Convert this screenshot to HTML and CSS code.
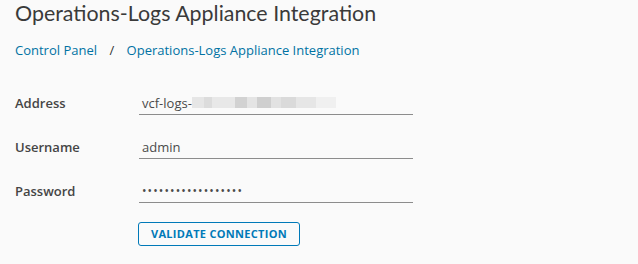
FILE: index.html
```html
<!DOCTYPE html>
<html>
<head>
    <meta charset="UTF-8">
    <title>Operations-Logs Appliance Integration</title>
    <link rel="stylesheet" href="styles.css">
</head>
<body>
    <div class="page">
        <h1 class="page-title">Operations-Logs Appliance Integration</h1>

        <nav class="breadcrumb">
            <a href="#">Control Panel</a>
            <span class="sep">/</span>
            <a href="#">Operations-Logs Appliance Integration</a>
        </nav>

        <form class="form">
            <div class="form-row">
                <label>Address</label>
                <div class="field">
                    <span>vcf-logs-</span><span class="masked"></span>
                </div>
            </div>
            <div class="form-row">
                <label>Username</label>
                <div class="field">admin</div>
            </div>
            <div class="form-row">
                <label>Password</label>
                <div class="field dots">&bull;&bull;&bull;&bull;&bull;&bull;&bull;&bull;&bull;&bull;&bull;&bull;&bull;&bull;&bull;&bull;&bull;&bull;</div>
            </div>
            <div class="actions">
                <button type="button" class="btn">Validate Connection</button>
            </div>
        </form>
    </div>
</body>
</html>
```

FILE: styles.css
```css
* {
    margin: 0;
    padding: 0;
    box-sizing: border-box;
}

body {
    font-family: 'Open Sans', Arial, sans-serif;
    background-color: #fafafa;
    color: #313131;
    overflow: hidden;
}

.page {
    padding: 0 15px;
}

.page-title {
    font-family: 'Lato', Arial, sans-serif;
    font-weight: 400;
    font-size: 21.4px;
    line-height: 26px;
    color: #3a3a3a;
}

.breadcrumb {
    margin-top: 12px;
    font-size: 13px;
    line-height: 24px;
}

.breadcrumb a {
    color: #0072a3;
    text-decoration: none;
}

.breadcrumb .sep {
    color: #333;
    margin: 0 9px;
}

.form {
    margin-top: 19px;
}

.form-row {
    display: flex;
    align-items: center;
    height: 44px;
}

.form-row label {
    width: 124px;
    font-size: 13px;
    font-weight: 600;
    color: #454545;
}

.field {
    width: 274px;
    height: 23px;
    padding-left: 3px;
    border-bottom: 1px solid #8c8c8c;
    font-size: 13px;
    line-height: 22px;
    color: #4a4a4a;
    display: flex;
    align-items: center;
}

.field.dots {
    font-size: 12px;
    letter-spacing: 1.1px;
}

.masked {
    width: 144px;
    height: 11px;
    background: linear-gradient(to right,
        #e6e6e6 0 8%, #dcdcdc 8% 14%, #e8e8e8 14% 30%, #d2d2d2 30% 38%,
        #e4e4e4 38% 45%, #cfcfcf 45% 55%, #e2e2e2 55% 62%, #dadada 62% 72%,
        #e6e6e6 72% 86%, #f0f0f0 86% 100%);
}

.actions {
    margin-top: 8px;
    padding-left: 123px;
}

.btn {
    height: 24px;
    padding: 0 12px;
    border: 1px solid #0079b8;
    border-radius: 3px;
    background: transparent;
    color: #0079b8;
    font-family: 'Open Sans', Arial, sans-serif;
    font-size: 11px;
    font-weight: 700;
    text-transform: uppercase;
    letter-spacing: 0.3px;
}
```
